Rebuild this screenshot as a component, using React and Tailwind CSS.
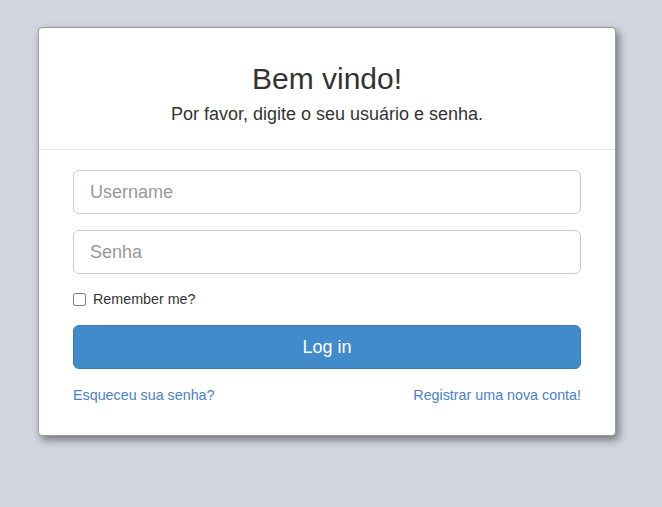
export default function App() {
  return (
    <div
      className="min-h-[507px] bg-[#d2d6de] pt-[27px] pl-[38px]"
      style={{ fontFamily: '"Liberation Sans", Arial, sans-serif' }}
    >
      <div className="w-[578px] bg-white border border-[#9a9a9a] rounded-[4px] shadow-[3px_4px_8px_rgba(0,0,0,0.45)]">
        <div className="text-center pt-[34px] pb-[22px] border-b border-[#e5e5e5]">
          <h1 className="text-[30px] leading-[33px] text-[#333]">Bem vindo!</h1>
          <p className="mt-[7px] text-[18px] leading-[25px] text-[#333]">
            Por favor, digite o seu usuário e senha.
          </p>
        </div>
        <div className="px-[34px] pt-[20px] pb-[30px]">
          <input
            type="text"
            placeholder="Username"
            className="block w-full h-[44px] px-4 text-[18px] border border-[#ccc] rounded-[6px] placeholder:text-[#999] outline-none"
          />
          <input
            type="password"
            placeholder="Senha"
            className="block w-full h-[44px] mt-4 px-4 text-[18px] border border-[#ccc] rounded-[6px] placeholder:text-[#999] outline-none"
          />
          <label className="mt-[15px] flex items-center gap-[7px] text-[14.3px] leading-[20px] text-[#333]">
            <input type="checkbox" className="w-[13px] h-[13px] m-0" />
            Remember me?
          </label>
          <button
            type="submit"
            className="mt-4 w-full h-[44px] bg-[#428bca] border border-[#357ebd] rounded-[6px] text-white text-[18px]"
          >
            Log in
          </button>
          <div className="mt-4 flex justify-between text-[14.3px] leading-[20px] text-[#4a80c8]">
            <a href="#">Esqueceu sua senha?</a>
            <a href="#">Registrar uma nova conta!</a>
          </div>
        </div>
      </div>
    </div>
  );
}
